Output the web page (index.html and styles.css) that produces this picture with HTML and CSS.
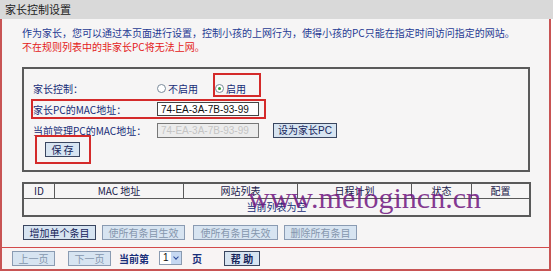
FILE: index.html
```html
<!DOCTYPE html>
<html lang="zh-CN">
<head>
    <meta charset="UTF-8">
    <meta name="viewport" content="width=device-width, initial-scale=1.0">
    <title>家长控制设置</title>
    <link rel="stylesheet" href="styles.css">
</head>
<body>
    <div class="title-bar">家长控制设置</div>
    <div class="panel">
        <p class="intro">作为家长，您可以通过本页面进行设置，控制小孩的上网行为，使得小孩的PC只能在指定时间访问指定的网站。</p>
        <p class="warn">不在规则列表中的非家长PC将无法上网。</p>

        <div class="box">
            <div class="row">
                <span class="label">家长控制：</span>
                <span class="radio"><i class="dot"></i>不启用</span>
                <span class="radio on"><i class="dot"></i>启用</span>
            </div>
            <div class="row">
                <span class="label">家长PC的MAC地址：</span>
                <input class="mac" type="text" value="74-EA-3A-7B-93-99">
            </div>
            <div class="row">
                <span class="label">当前管理PC的MAC地址：</span>
                <input class="mac" type="text" value="74-EA-3A-7B-93-99" disabled>
                <button class="btn set-btn">设为家长PC</button>
            </div>
            <button class="btn save-btn">保 存</button>

            <!-- 标注框 -->
            <div class="mark mark-on"></div>
            <div class="mark mark-mac"></div>
            <div class="mark mark-save"></div>
        </div>

        <table class="rules">
            <tr>
                <th class="c-id">ID</th>
                <th class="c-mac">MAC 地址</th>
                <th class="c-site">网站列表</th>
                <th class="c-plan">日程计划</th>
                <th class="c-state">状态</th>
                <th>配置</th>
            </tr>
            <tr>
                <td colspan="6" class="empty">当前列表为空</td>
            </tr>
        </table>

        <div class="actions">
            <button class="btn w-add">增加单个条目</button>
            <button class="btn off w-on">使所有条目生效</button>
            <button class="btn off w-off">使所有条目失效</button>
            <button class="btn off w-del">删除所有条目</button>
        </div>

        <div class="pager">
            <button class="btn off w-page">上一页</button>
            <button class="btn off w-page">下一页</button>
            <span class="cur">当前第</span>
            <span class="select"><span class="val">1</span><span class="arrow"></span></span>
            <span class="cur page-txt">页</span>
            <button class="btn w-help">帮 助</button>
        </div>

        <div class="watermark">www.melogincn.cn</div>
    </div>
</body>
</html>
```

FILE: styles.css
```css
body {
    margin: 0;
    width: 553px;
    font-family: "Noto Sans CJK SC", sans-serif;
    font-size: 10px;
    background-color: #fff;
}
.title-bar {
    height: 19px;
    line-height: 19px;
    padding-left: 5px;
    font-size: 11px;
    color: #222;
    background-color: #d9d9d9;
}
.panel {
    position: relative;
    width: 547px;
    height: 250px;
    border: 2px solid #c85454;
    border-top: none;
    background-color: #f6f5f5;
}
.intro, .warn {
    margin: 0;
    padding-left: 20px;
    line-height: 14px;
}
.intro {
    padding-top: 7px;
    color: #1f3a93;
}
.warn {
    color: #e42020;
}
.box {
    position: relative;
    width: 504px;
    height: 101px;
    margin: 13px 0 0 20px;
    padding: 0;
    border: 2px solid #5a5a5a;
}
.row {
    display: flex;
    align-items: center;
    height: 20px;
    margin-top: 1px;
    padding-left: 9px;
    color: #162c78;
}
.row:first-child {
    margin-top: 9px;
}
.label {
    width: 124px;
}
.radio {
    display: flex;
    align-items: center;
    margin-right: 17px;
}
.dot {
    width: 9px;
    height: 9px;
    margin-right: 2px;
    border: 1px solid #7a8a9a;
    border-radius: 50%;
    background-color: #fff;
    box-sizing: border-box;
    position: relative;
}
.radio.on .dot::after {
    content: "";
    position: absolute;
    left: 2px;
    top: 2px;
    width: 3px;
    height: 3px;
    border-radius: 50%;
    background-color: #2e9a3a;
}
.mac {
    width: 102px;
    height: 14px;
    box-sizing: border-box;
    padding: 0 3px;
    border: 1px solid #444;
    font-family: "Liberation Sans", sans-serif;
    font-size: 10px;
    color: #111;
    background-color: #fff;
}
.mac:disabled {
    height: 15px;
    color: #c4c4c4;
    background-color: #ececec;
    border-color: #777;
}
.btn {
    height: 15px;
    padding: 0;
    border: 1px solid #3a4660;
    font-family: "Noto Sans CJK SC", sans-serif;
    font-size: 10px;
    line-height: 13px;
    color: #16245a;
    background-color: #d7e4f1;
}
.btn.off {
    color: #8596ad;
    border-color: #8a9bb2;
}
.set-btn {
    width: 64px;
    margin-left: 14px;
    font-family: "Liberation Sans", "Noto Sans CJK SC", sans-serif;
}
.save-btn {
    width: 35px;
    margin: 2px 0 0 21px;
    display: block;
}
.mark {
    position: absolute;
    border: 2px solid #d42a2a;
}
.mark-on {
    left: 189px;
    top: 4px;
    width: 44px;
    height: 20px;
}
.mark-mac {
    left: 7px;
    top: 30px;
    width: 231px;
    height: 16px;
}
.mark-save {
    left: 11px;
    top: 66px;
    width: 52px;
    height: 25px;
}
.rules {
    width: 509px;
    margin: 10px 0 0 20px;
    border-collapse: collapse;
    border: 2px solid #5a5a5a;
    color: #1a1a4a;
}
.rules th, .rules td {
    border: 1px solid #5a5a5a;
    padding: 0;
    font-weight: normal;
    text-align: center;
    line-height: 12px;
}
.rules th {
    height: 14px;
}
.rules td {
    height: 16px;
    color: #162c78;
}
.c-id { width: 30px; }
.c-mac { width: 128px; }
.c-site { width: 113px; }
.c-plan { width: 113px; }
.c-state { width: 59px; }
.actions {
    display: flex;
    margin: 8px 0 0 21px;
    height: 22px;
}
.actions .btn {
    margin-right: 6px;
}
.w-add { width: 73px; }
.w-on { width: 83px; margin-right: 8px !important; }
.w-off { width: 85px; }
.w-del { width: 73px; }
.pager {
    display: flex;
    align-items: center;
    height: 20px;
    padding: 0 0 0 10px;
    border-top: 1px solid #d24a4a;
    background-color: #f8f4f4;
}
.w-page {
    width: 43px;
    margin-right: 13px;
}
.w-page + .w-page {
    margin-right: 8px;
}
.cur {
    font-weight: bold;
    color: #1a2f7a;
}
.select {
    display: flex;
    align-items: stretch;
    width: 23px;
    height: 14px;
    margin: 0 10px 0 10px;
    border: 1px solid #8a9ab0;
    box-sizing: border-box;
    background-color: #fff;
}
.val {
    flex: 1;
    padding-left: 3px;
    font-family: "Liberation Sans", sans-serif;
    line-height: 12px;
    color: #111;
}
.arrow {
    width: 10px;
    background-color: #c6d8f2;
    position: relative;
}
.arrow::after {
    content: "";
    position: absolute;
    left: 3px;
    top: 3px;
    width: 3px;
    height: 3px;
    border-right: 1.5px solid #2a4a9a;
    border-bottom: 1.5px solid #2a4a9a;
    transform: rotate(45deg);
}
.page-txt {
    margin-right: 22px;
}
.w-help {
    width: 36px;
    font-weight: bold;
}
.watermark {
    position: absolute;
    left: 246px;
    top: 164px;
    font-family: "Liberation Serif", serif;
    font-size: 30px;
    line-height: 30px;
    color: rgba(112, 22, 128, 0.85);
    pointer-events: none;
}
```
